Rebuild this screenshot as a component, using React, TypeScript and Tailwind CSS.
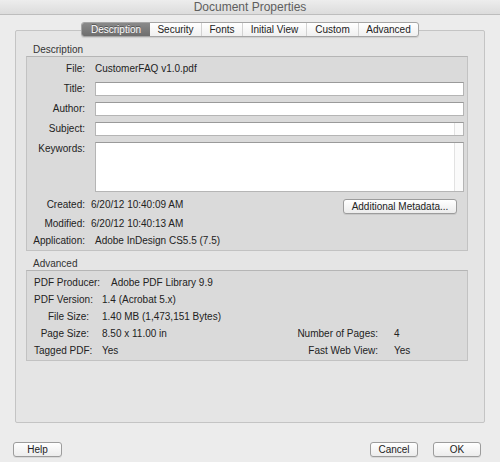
import React from 'react';

const font = { fontFamily: '"Liberation Sans", Arial, sans-serif' };

const tabs = ['Description', 'Security', 'Fonts', 'Initial View', 'Custom', 'Advanced'];
const tabWidths = ['w-[68px]', 'w-[51px]', 'w-[41px]', 'w-[64px]', 'w-[52px]', 'w-[60px]'];

const Field: React.FC<{ label: string; tall?: boolean; scroll?: boolean }> = ({ label, tall, scroll }) => (
  <div className={`flex ${tall ? 'h-[50px]' : 'h-[14px]'}`}>
    <div className="w-[58px] text-right leading-[14px] shrink-0">{label}</div>
    <div className="ml-[10px] w-[369px] flex bg-white border border-[#b5b5b5] border-t-[#9a9a9a]">
      <div className="flex-1" />
      {scroll && <div className="w-[9px] border-l border-[#e2e2e2] bg-[#fafafa]" />}
    </div>
  </div>
);

const Info: React.FC<{ label: string; value: string; offset?: string }> = ({ label, value, offset = 'ml-[6px]' }) => (
  <div className="flex h-[14px] leading-[14px]">
    <div className="w-[58px] text-right shrink-0">{label}</div>
    <div className={offset}>{value}</div>
  </div>
);

const advRows = [
  { label: 'PDF Producer:', value: 'Adobe PDF Library 9.9', align: 'text-left', val: 'ml-[22px]' },
  { label: 'PDF Version:', value: '1.4 (Acrobat 5.x)', align: 'text-left', val: 'ml-[13px]' },
  { label: 'File Size:', value: '1.40 MB (1,473,151 Bytes)', align: 'text-right', val: 'ml-[13px]' },
  { label: 'Page Size:', value: '8.50 x 11.00 in', align: 'text-right', val: 'ml-[13px]', rl: 'Number of Pages:', rv: '4' },
  { label: 'Tagged PDF:', value: 'Yes', align: 'text-left', val: 'ml-[13px]', rl: 'Fast Web View:', rv: 'Yes' },
];

const Button: React.FC<{ label: string; w: string }> = ({ label, w }) => (
  <button className={`${w} h-[15px] rounded-[3px] border border-[#9c9c9c] bg-gradient-to-b from-white to-[#ececec] text-[10px] leading-[13px] text-[#222] shadow-[0_1px_0_rgba(0,0,0,0.08)]`}>
    {label}
  </button>
);

export default function App() {
  return (
    <div style={font} className="w-[500px] h-[462px] bg-[#ececec] text-[10px] text-[#222] flex flex-col overflow-hidden">
      <div className="h-[15px] bg-gradient-to-b from-[#ededed] to-[#dcdcdc] border-b border-[#bdbdbd] text-center text-[12px] leading-[15px] text-[#5e5e5e]">
        Document Properties
      </div>

      <div className="pt-[7px] px-[15px] flex flex-col">
        <div className="relative z-10 flex justify-center h-[15px]">
          <div className="flex rounded-[3px] border border-[#a5a5a5] bg-gradient-to-b from-white to-[#f0f0f0] overflow-hidden shadow-[0_1px_1px_rgba(0,0,0,0.1)]">
            {tabs.map((t, i) => (
              <div
                key={t}
                className={`${tabWidths[i]} h-[13px] text-center leading-[13px] ${
                  i === 0
                    ? 'bg-gradient-to-b from-[#8a8a8a] to-[#6e6e6e] text-white [text-shadow:0_-1px_0_rgba(0,0,0,0.4)]'
                    : i > 1
                    ? 'border-l border-[#d2d2d2]'
                    : ''
                }`}
              >
                {t}
              </div>
            ))}
          </div>
        </div>

        <div className="-mt-[7px] h-[393px] w-[470px] border border-[#c4c4c4] rounded-[2px] bg-[#e5e5e5] pl-[10px] pr-[16px] pt-[12px] flex flex-col">
          <div className="pl-[7px] h-[13px] leading-[13px] text-[#333]">Description</div>
          <div className="bg-[#dadada] border border-[#c2c2c2] border-t-[#b5b5b5] pt-[5px] pb-[2px] flex flex-col">
            <div className="flex h-[14px] leading-[14px]">
              <div className="w-[58px] text-right shrink-0">File:</div>
              <div className="ml-[10px]">CustomerFAQ v1.0.pdf</div>
            </div>
            <div className="mt-[6px] flex flex-col gap-[6px]">
              <Field label="Title:" />
              <Field label="Author:" />
              <Field label="Subject:" scroll />
              <Field label="Keywords:" tall scroll />
            </div>
            <div className="mt-[6px] flex flex-col gap-[3px]">
              <div className="flex items-start">
                <div className="flex-1">
                  <Info label="Created:" value="6/20/12 10:40:09 AM" />
                </div>
                <div className="mr-[10px] mt-[1px]">
                  <Button label="Additional Metadata..." w="w-[114px]" />
                </div>
              </div>
              <Info label="Modified:" value="6/20/12 10:40:13 AM" />
              <Info label="Application:" value="Adobe InDesign CS5.5 (7.5)" offset="ml-[10px]" />
            </div>
          </div>

          <div className="mt-[6px] pl-[7px] h-[13px] leading-[13px] text-[#333]">Advanced</div>
          <div className="bg-[#dadada] border border-[#c2c2c2] border-t-[#b5b5b5] pl-[7px] pt-[5px] pb-[2px] flex flex-col gap-[3px]">
            {advRows.map((r) => (
              <div key={r.label} className="flex h-[14px] leading-[14px]">
                <div className={`w-[55px] shrink-0 whitespace-nowrap ${r.align}`}>{r.label}</div>
                <div className={`${r.val} flex-1 whitespace-nowrap`}>{r.value}</div>
                {r.rl && (
                  <div className="flex">
                    <div className="text-right whitespace-nowrap">{r.rl}</div>
                    <div className="w-[89px] pl-[16px]">{r.rv}</div>
                  </div>
                )}
              </div>
            ))}
          </div>
        </div>
      </div>

      <div className="mt-[19px] px-[13px] flex items-center">
        <Button label="Help" w="w-[49px]" />
        <div className="flex-1" />
        <Button label="Cancel" w="w-[48px]" />
        <div className="w-[15px]" />
        <Button label="OK" w="w-[48px]" />
        <div className="w-[6px]" />
      </div>
    </div>
  );
}
